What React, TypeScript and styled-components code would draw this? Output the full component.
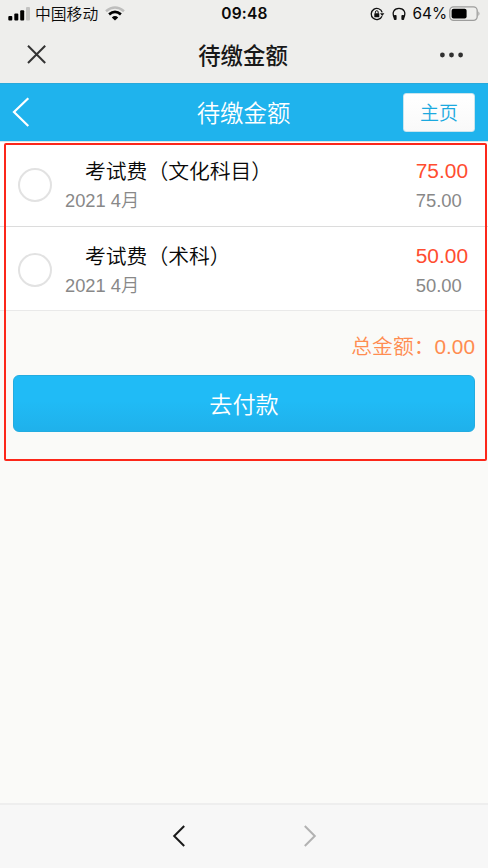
import React from 'react';
import styled, { createGlobalStyle } from 'styled-components';

const GlobalStyle = createGlobalStyle`
  * { box-sizing: border-box; }
  body {
    margin: 0;
    background: #fafaf8;
    font-family: "Liberation Sans", "Noto Sans CJK SC", sans-serif;
  }
`;

const Screen = styled.div`
  display: flex;
  flex-direction: column;
  width: 488px;
  height: 868px;
  overflow: hidden;
  background: #fafaf8;
`;

const StatusBar = styled.div`
  display: grid;
  grid-template-columns: 1fr auto 1fr;
  align-items: center;
  height: 27px;
  padding: 0 7px 0 8px;
  background: #eeeeec;
  color: #0a0a0a;
`;

const StatusGroup = styled.div<{ $end?: boolean }>`
  display: flex;
  align-items: center;
  height: 26px;
  justify-content: ${(p) => (p.$end ? 'flex-end' : 'flex-start')};
`;

const Carrier = styled.span`
  margin: 0 7px 0 4px;
  font: 350 15.8px/26px "Noto Sans CJK SC", sans-serif;
`;

const Clock = styled.span`
  font: 600 15.5px/27px Inter, sans-serif;
  letter-spacing: 0.25px;
`;

const Percent = styled.span`
  margin: 0 2px 0 6px;
  font: 400 15.4px/27px Inter, sans-serif;
  letter-spacing: 0;
`;

const NavBar = styled.div`
  display: grid;
  grid-template-columns: 60px 1fr 60px;
  align-items: center;
  height: 56px;
  padding: 0 2px 2px 0;
  background: #eeeeec;
`;

const NavTitle = styled.h1`
  margin: 0;
  text-align: center;
  color: #181818;
  font: 500 22.4px/54px "Noto Sans CJK SC", sans-serif;
`;

const NavSlot = styled.div<{ $end?: boolean }>`
  display: flex;
  justify-content: ${(p) => (p.$end ? 'flex-end' : 'flex-start')};
  padding: ${(p) => (p.$end ? '1px 22px 0 0' : '0 0 0 26px')};
`;

const PageHeader = styled.header`
  display: grid;
  grid-template-columns: 90px 1fr 90px;
  align-items: center;
  height: 58px;
  padding: 0 13px 1px 12px;
  background: #1fb3ed;
  border-top: 1px solid #28a9db;
`;

const HeaderTitle = styled.h2`
  margin: 0;
  text-align: center;
  color: #fff;
  font: 350 23.4px/56px "Noto Sans CJK SC", sans-serif;
`;

const HomeButton = styled.button`
  justify-self: end;
  width: 72px;
  height: 39px;
  padding: 0 0 2px;
  border: 1px solid #c9e5ee;
  border-radius: 3px;
  background: linear-gradient(#fff, #f9f9f9);
  color: #1ba9df;
  font: 350 19px/35px "Noto Sans CJK SC", sans-serif;
`;

const Main = styled.main`
  position: relative;
  flex: 1;
  border-top: 1px solid #d8e4e8;
`;

const Highlight = styled.div`
  position: absolute;
  inset: 1px 1px auto 4px;
  height: 318px;
  border: 2px solid #fc271a;
  border-radius: 2px;
  pointer-events: none;
`;

const FeeRow = styled.label<{ $height: number; $line: string }>`
  display: grid;
  grid-template-columns: 47px 1fr auto;
  align-items: start;
  height: ${(p) => p.$height}px;
  padding: 14px 20px 0 18px;
  background: #fff;
  border-bottom: 1px solid ${(p) => p.$line};
`;

const Radio = styled.span`
  width: 34px;
  height: 34px;
  margin-top: 12px;
  border: 2px solid #e2e2e2;
  border-radius: 50%;
`;

const FeeName = styled.div`
  padding-left: 20px;
  color: #080808;
  font: 350 20.8px/31px "Liberation Sans", "Noto Sans CJK SC", sans-serif;
`;

const FeeTerm = styled.div`
  color: #888;
  font: 350 18.3px/28px "Liberation Sans", "Noto Sans CJK SC", sans-serif;
`;

const Amount = styled.div`
  color: #ff4d30;
  font-size: 20.9px;
  line-height: 30px;
  padding-bottom: 1px;
`;

const Original = styled.div`
  color: #888;
  font-size: 18.4px;
  line-height: 28px;
`;

const Summary = styled.section`
  display: flex;
  flex-direction: column;
  padding: 20px 13px 0;
`;

const Total = styled.div`
  height: 44px;
  text-align: right;
  color: #ff8c50;
  font: 350 20.8px/32px "Liberation Sans", "Noto Sans CJK SC", sans-serif;
`;

const PayButton = styled.button`
  height: 57px;
  padding: 0 0 1px;
  border: 1px solid #23ace0;
  border-radius: 6px;
  background: linear-gradient(#20bbf6 45%, #1fb1eb);
  color: #fff;
  font: 350 23.2px/54px "Noto Sans CJK SC", sans-serif;
`;

const Footer = styled.footer`
  display: flex;
  justify-content: center;
  align-items: center;
  gap: 117px;
  height: 65px;
  padding-bottom: 2px;
  border-top: 2px solid #eeeeee;
  background: #f7f7f7;
`;

const Signal = () => (
  <svg width="23" height="14" viewBox="0 0 23 14">
    <rect x="0.3" y="9" width="4" height="4.5" rx="1" />
    <rect x="6.3" y="6.4" width="4" height="7.1" rx="1" />
    <rect x="12.2" y="3.3" width="4" height="10.2" rx="1" />
    <rect x="18" y="0" width="4" height="13.5" rx="1" fill="#c3c3c2" />
  </svg>
);

const Wifi = () => (
  <svg width="20" height="15" viewBox="0 0 20 15" fill="none">
    <path d="M1 5.2Q10-2.2 19 5.2" stroke="#bebebd" strokeWidth="2.6" />
    <path d="M4.1 8.4Q10 3.4 15.9 8.4" stroke="#000" strokeWidth="2.7" />
    <path d="M6.8 11.4Q10 8.6 13.2 11.4L10 14.6Z" fill="#000" />
  </svg>
);

const RotationLock = () => (
  <svg width="15" height="14" viewBox="0 0 15 14" fill="none">
    <path d="M12 9.2A5.6 5.6 0 1 1 12.2 5.4" stroke="#111" strokeWidth="1.3" />
    <path d="M10 6.2H14.4L12.2 9Z" fill="#111" />
    <rect x="4.3" y="6.3" width="5" height="3.9" rx="0.5" fill="#111" />
    <path d="M5.4 6.5V5.1a1.4 1.4 0 0 1 2.8 0V6.5" stroke="#111" strokeWidth="1" />
  </svg>
);

const Headphones = () => (
  <svg width="14" height="14" viewBox="0 0 14 14" fill="none">
    <path d="M2.6 11.5C-0.6 5.8 2 1.4 7 1.4S14.6 5.8 11.4 11.5" stroke="#111" strokeWidth="1.3" />
    <rect x="1.8" y="8" width="2.8" height="5" rx="1" fill="#111" />
    <rect x="9.4" y="8" width="2.8" height="5" rx="1" fill="#111" />
  </svg>
);

const Battery = () => (
  <svg width="32" height="16" viewBox="0 0 32 16">
    <rect x="0.8" y="0.8" width="27.4" height="13.6" rx="3.8" fill="none" stroke="#9d9d9c" strokeWidth="1.3" />
    <rect x="2.6" y="2.7" width="15" height="9.9" rx="2" fill="#000" />
    <path d="M29.4 5.2Q31.6 7.6 29.4 10Z" fill="#9d9d9c" />
  </svg>
);

const LockSlot = styled.span`
  display: flex;
  margin-right: 7px;
`;

const fees = [
  { name: '考试费（文化科目）', term: '2021 4月', amount: '75.00', height: 85, line: '#dcdcdc' },
  { name: '考试费（术科）', term: '2021 4月', amount: '50.00', height: 84, line: '#e9e9e9' },
];

export default function App() {
  return (
    <Screen>
      <GlobalStyle />
      <StatusBar>
        <StatusGroup>
          <Signal />
          <Carrier>中国移动</Carrier>
          <Wifi />
        </StatusGroup>
        <Clock>09:48</Clock>
        <StatusGroup $end>
          <LockSlot><RotationLock /></LockSlot>
          <Headphones />
          <Percent>64%</Percent>
          <Battery />
        </StatusGroup>
      </StatusBar>
      <NavBar>
        <NavSlot>
          <svg width="21" height="21" viewBox="0 0 21 21">
            <path d="M2 1.8L19.2 19M19.2 1.8L2 19" stroke="#333" strokeWidth="2" />
          </svg>
        </NavSlot>
        <NavTitle>待缴金额</NavTitle>
        <NavSlot $end>
          <svg width="25" height="6" viewBox="0 0 25 6" fill="#303030">
            <circle cx="3.4" cy="3" r="2.4" />
            <circle cx="12.5" cy="3" r="2.4" />
            <circle cx="21.6" cy="3" r="2.4" />
          </svg>
        </NavSlot>
      </NavBar>
      <PageHeader>
        <svg width="18" height="30" viewBox="0 0 18 30" fill="none">
          <path d="M16.3 1.2L2 15L16.3 29" stroke="#fff" strokeWidth="2.2" />
        </svg>
        <HeaderTitle>待缴金额</HeaderTitle>
        <HomeButton>主页</HomeButton>
      </PageHeader>
      <Main>
        {fees.map((fee) => (
          <FeeRow key={fee.name} $height={fee.height} $line={fee.line}>
            <Radio />
            <div>
              <FeeName>{fee.name}</FeeName>
              <FeeTerm>{fee.term}</FeeTerm>
            </div>
            <div>
              <Amount>{fee.amount}</Amount>
              <Original>{fee.amount}</Original>
            </div>
          </FeeRow>
        ))}
        <Summary>
          <Total>总金额：0.00</Total>
          <PayButton>去付款</PayButton>
        </Summary>
        <Highlight />
      </Main>
      <Footer>
        <svg width="14" height="24" viewBox="0 0 14 24" fill="none">
          <path d="M12.2 2L2.2 12L12.2 22" stroke="#1a1a1a" strokeWidth="2" />
        </svg>
        <svg width="14" height="24" viewBox="0 0 14 24" fill="none">
          <path d="M1.8 2L11.8 12L1.8 22" stroke="#b2b2b2" strokeWidth="2" />
        </svg>
      </Footer>
    </Screen>
  );
}
